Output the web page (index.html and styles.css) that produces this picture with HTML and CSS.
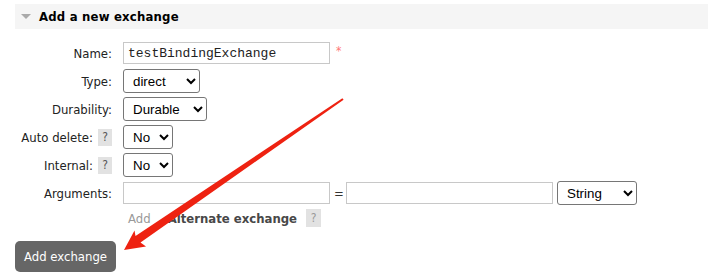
FILE: index.html
```html
<!DOCTYPE html>
<html>
<head>
<meta charset="utf-8">
<link rel="stylesheet" href="styles.css">
</head>
<body>
<div class="section">
  <div class="section-head">
    <span class="tri"></span>
    <h2>Add a new exchange</h2>
  </div>
  <form class="form">
    <label class="lbl">Name:</label>
    <div class="cell">
      <input class="txt mono" type="text" value="testBindingExchange">
      <span class="req">*</span>
    </div>

    <label class="lbl">Type:</label>
    <div class="cell">
      <select class="sel sel-type">
        <option>direct</option>
        <option>fanout</option>
        <option>headers</option>
        <option>topic</option>
      </select>
    </div>

    <label class="lbl">Durability:</label>
    <div class="cell">
      <select class="sel sel-dur">
        <option>Durable</option>
        <option>Transient</option>
      </select>
    </div>

    <label class="lbl">Auto delete: <span class="help">?</span></label>
    <div class="cell">
      <select class="sel sel-yn">
        <option>No</option>
        <option>Yes</option>
      </select>
    </div>

    <label class="lbl">Internal: <span class="help">?</span></label>
    <div class="cell">
      <select class="sel sel-yn">
        <option>No</option>
        <option>Yes</option>
      </select>
    </div>

    <label class="lbl">Arguments:</label>
    <div class="cell args">
      <input class="txt" type="text">
      <span class="eq">=</span>
      <input class="txt" type="text">
      <select class="sel sel-str">
        <option>String</option>
        <option>Number</option>
        <option>Boolean</option>
        <option>List</option>
      </select>
    </div>

    <span></span>
    <div class="cell addrow">
      <span class="addlink">Add</span>
      <span class="alt">Alternate exchange</span>
      <span class="help help-lg">?</span>
    </div>
  </form>
  <button class="btn" type="button">Add exchange</button>
</div>
<svg class="arrow" width="708" height="280" viewBox="0 0 708 280">
  <polygon points="124,250 146,246.5 140.5,242.5 343.6,99.8 342.4,98.2 135.5,236 134.5,230.5" fill="#ee2211"/>
</svg>
</body>
</html>
```

FILE: styles.css
```css
html, body {
  margin: 0;
  padding: 0;
  background: #fff;
}
body {
  width: 708px;
  height: 280px;
  overflow: hidden;
  position: relative;
  font-family: "DejaVu Sans Condensed", "DejaVu Sans", sans-serif;
  font-stretch: condensed;
  font-size: 13px;
  color: #444;
}
.section {
  margin: 4px 0 0 15px;
}
.section-head {
  height: 25px;
  background: #f5f5f5;
  display: flex;
  align-items: center;
  padding-left: 6px;
  gap: 8px;
}
.tri {
  width: 0;
  height: 0;
  border-left: 5px solid transparent;
  border-right: 5px solid transparent;
  border-top: 5px solid #aaa;
}
.section-head h2 {
  margin: 0;
  font-size: 13px;
  font-weight: bold;
  letter-spacing: 0.2px;
  color: #000;
}
.form {
  margin-top: 10px;
  display: grid;
  grid-template-columns: 98px auto;
  grid-template-rows: repeat(6, 28px) 22px;
  column-gap: 10px;
  align-items: center;
}
.lbl {
  text-align: right;
  padding-right: 1px;
  color: #222;
  display: flex;
  justify-content: flex-end;
  align-items: center;
  gap: 5px;
}
.cell {
  display: flex;
  align-items: center;
}
.txt {
  box-sizing: border-box;
  width: 207px;
  height: 22px;
  border: 1px solid #c8c8c8;
  padding: 0 4px;
  margin: 0;
  font-family: "Liberation Mono", monospace;
  font-size: 13px;
  color: #222;
  outline: none;
}
.req {
  color: #f77;
  font-size: 12px;
  align-self: flex-start;
  margin: 2px 0 0 6px;
}
.sel {
  box-sizing: border-box;
  height: 24px;
  margin: 0;
  padding: 0 2px 0 5px;
  border: 1px solid #767676;
  border-radius: 3px;
  background: #fff;
  font-family: "Liberation Sans", Arial, sans-serif;
  font-size: 13.33px;
  color: #000;
}
.sel-type { width: 77px; }
.sel-dur { width: 84px; }
.sel-yn { width: 50px; }
.sel-str { width: 80px; }
.args {
  gap: 4px;
}
.eq {
  width: 8px;
  text-align: center;
  color: #333;
}
.help {
  display: inline-flex;
  align-items: center;
  justify-content: center;
  width: 14px;
  height: 17px;
  background: #e2e2e2;
  color: #555;
  font-size: 12px;
}
.help-lg {
  width: 15px;
  height: 18px;
  color: #999;
  margin-left: 9px;
}
.addrow {
  height: 22px;
}
.addlink {
  color: #999;
  font-size: 13px;
  margin-left: 5px;
}
.alt {
  font-weight: bold;
  color: #484848;
  margin-left: 17px;
}
.btn {
  margin-top: 12px;
  width: 101px;
  height: 31px;
  border: none;
  border-radius: 5px;
  background: #666;
  color: #fff;
  font-family: "DejaVu Sans Condensed", "DejaVu Sans", sans-serif;
  font-stretch: condensed;
  font-size: 13px;
  padding: 0;
}
.arrow {
  position: absolute;
  left: 0;
  top: 0;
  pointer-events: none;
}
```
